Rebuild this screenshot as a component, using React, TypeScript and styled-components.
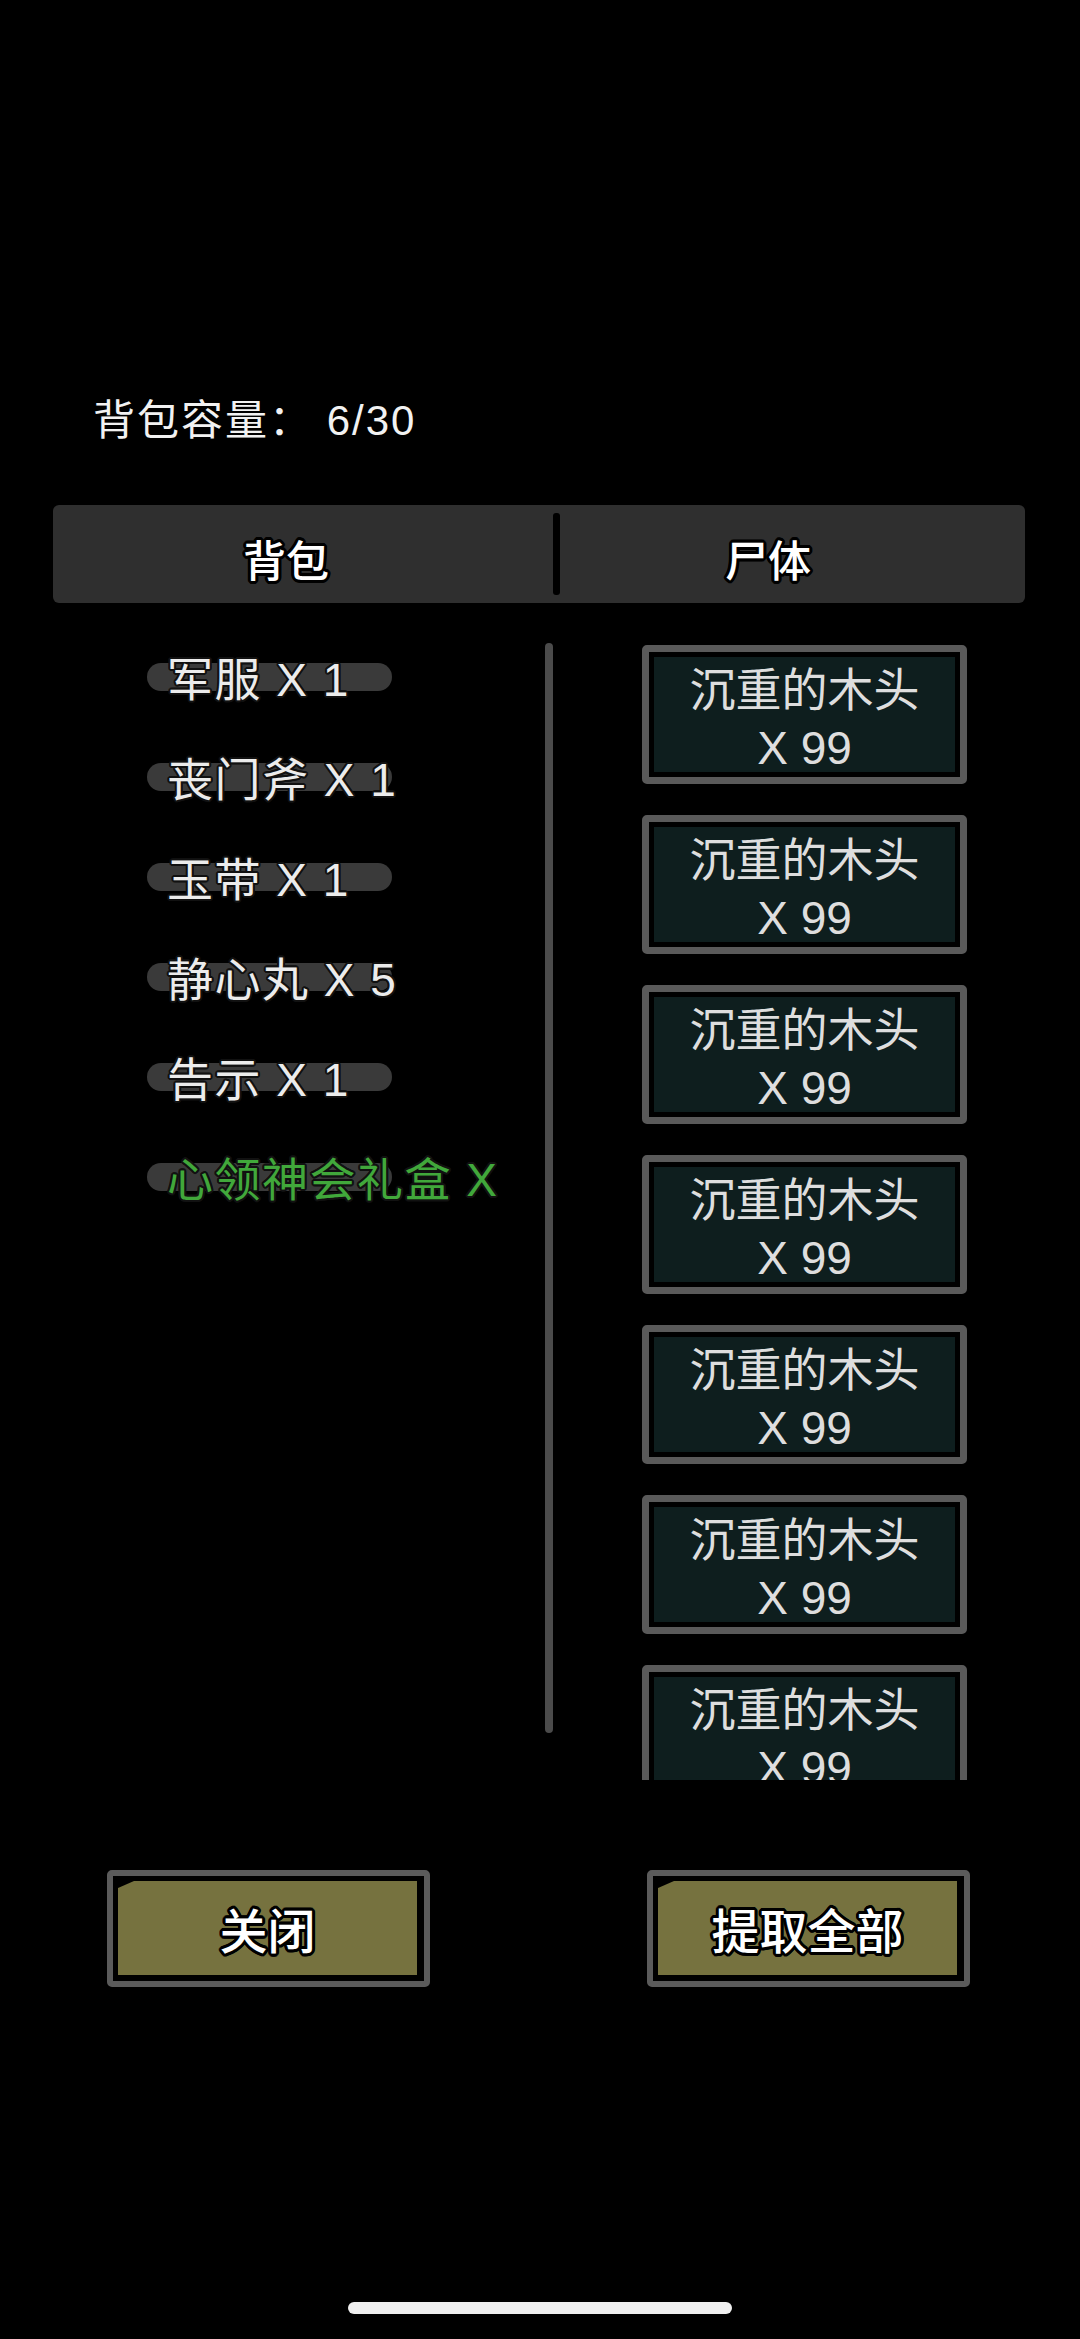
import styled, { createGlobalStyle } from 'styled-components'

const GlobalStyle = createGlobalStyle`
  html, body {
    margin: 0;
    padding: 0;
    background: #000;
  }
  body {
    font-family: "Liberation Sans", "Noto Sans CJK SC", sans-serif;
  }
`

// outline the text by stacking shadows all round it
const outline = (r: number, c = '#000') =>
    Array.from({ length: 16 }, (_, i) => {
        const a = (i * Math.PI) / 8
        return `${(Math.cos(a) * r).toFixed(1)}px ${(Math.sin(a) * r).toFixed(1)}px 0 ${c}`
    }).join(', ')

const Page = styled.div`
    width: 1080px;
    height: 2339px;
    overflow: hidden;
    background: #000;
    color: #fff;
    display: flex;
    flex-direction: column;
`

const Capacity = styled.div`
    margin: 396px 0 0 93px;
    font-size: 42px;
    line-height: 50px;
    color: #f2f2f2;
    letter-spacing: 2px;
`

const TabBar = styled.div`
    margin: 59px 55px 0 53px;
    height: 98px;
    background: #2f2f2f;
    border-radius: 6px;
    display: flex;
`

const Tab = styled.div<{ $shift: number; $grow?: boolean }>`
    ${(p) => (p.$grow ? 'flex: 1;' : 'width: 500px;')}
    display: flex;
    align-items: center;
    justify-content: center;
    box-sizing: border-box;
    padding: 8px ${(p) => p.$shift}px 0 0;
    font-size: 43px;
    font-weight: 500;
    color: #fff;
    text-shadow: ${outline(3)};
`

const TabDivider = styled.div`
    width: 7px;
    margin: 8px 0;
    background: #000;
    border-radius: 3px;
`

const Body = styled.div`
    display: flex;
    height: 1177px;
`

const BagList = styled.div`
    width: 545px;
    box-sizing: border-box;
    padding: 27px 0 0 147px;
    display: flex;
    flex-direction: column;
`

const BagRow = styled.div`
    height: 100px;
    display: grid;
    align-items: center;
`

const Pill = styled.div`
    grid-area: 1 / 1;
    width: 245px;
    height: 28px;
    margin-top: -6px;
    border-radius: 14px;
    background: #3a3a3a;
`

const ItemName = styled.div<{ $special?: boolean }>`
    grid-area: 1 / 1;
    box-sizing: border-box;
    max-width: 355px;
    padding-left: 20px;
    font-size: 46px;
    line-height: 56px;
    letter-spacing: 1.5px;
    white-space: nowrap;
    overflow: hidden;
    color: ${(p) => (p.$special ? '#41a83b' : '#ececec')};
    text-shadow: ${outline(2, '#111')};
`

const ScrollTrack = styled.div`
    flex-shrink: 0;
    width: 8px;
    height: 1090px;
    margin-top: 40px;
    border-radius: 4px;
    background: #4b4b4b;
`

const CorpseList = styled.div`
    margin-left: 89px;
    padding-top: 42px;
    box-sizing: border-box;
    height: 100%;
    overflow: hidden;
    display: flex;
    flex-direction: column;
    gap: 31px;
`

const Card = styled.div`
    flex-shrink: 0;
    width: 325px;
    height: 139px;
    box-sizing: border-box;
    border: 7px solid #5a5a5a;
    border-radius: 5px;
    padding: 5px;
    background: #000;
`

const CardFill = styled.div`
    height: 100%;
    box-sizing: border-box;
    padding-top: 9px;
    background: #0e1e1e;
    display: flex;
    flex-direction: column;
    align-items: center;
    justify-content: center;
    font-size: 46px;
    line-height: 58px;
    color: #dedede;
`

const Footer = styled.div`
    margin-top: 90px;
    padding: 0 110px 0 107px;
    display: flex;
    justify-content: space-between;
`

const ActionButton = styled.button`
    width: 323px;
    height: 117px;
    box-sizing: border-box;
    border: 6px solid #5b5b5b;
    border-radius: 5px;
    padding: 5px 7px 6px 5px;
    background: #000;
    font-family: inherit;
    cursor: pointer;
`

const ButtonFill = styled.span`
    height: 100%;
    display: flex;
    align-items: center;
    justify-content: center;
    background: #76723f;
    clip-path: polygon(16px 0, 100% 0, 100% 100%, 0 100%, 0 7px);
    font-size: 48px;
    font-weight: 500;
    color: #fff;
    text-shadow: ${outline(3)};
`

const HomeBar = styled.div`
    margin: auto 0 25px;
    align-self: center;
    width: 384px;
    height: 12px;
    border-radius: 6px;
    background: #f0f0f0;
`

const bag = [
    { name: '军服 X 1' },
    { name: '丧门斧 X 1' },
    { name: '玉带 X 1' },
    { name: '静心丸 X 5' },
    { name: '告示 X 1' },
    { name: '心领神会礼盒 X 1', special: true },
]

const corpse = Array.from({ length: 7 }, () => ({ name: '沉重的木头', count: 99 }))

export default function App() {
    return (
        <Page>
            <GlobalStyle />
            <Capacity>背包容量： 6/30</Capacity>

            <TabBar>
                <Tab $shift={34}>背包</Tab>
                <TabDivider />
                <Tab $shift={49} $grow>
                    尸体
                </Tab>
            </TabBar>

            <Body>
                <BagList>
                    {bag.map((item) => (
                        <BagRow key={item.name}>
                            <Pill />
                            <ItemName $special={item.special}>{item.name}</ItemName>
                        </BagRow>
                    ))}
                </BagList>

                <ScrollTrack />

                <CorpseList>
                    {corpse.map((item, i) => (
                        <Card key={i}>
                            <CardFill>
                                <span>{item.name}</span>
                                <span>X {item.count}</span>
                            </CardFill>
                        </Card>
                    ))}
                </CorpseList>
            </Body>

            <Footer>
                <ActionButton>
                    <ButtonFill>关闭</ButtonFill>
                </ActionButton>
                <ActionButton>
                    <ButtonFill>提取全部</ButtonFill>
                </ActionButton>
            </Footer>

            <HomeBar />
        </Page>
    )
}
